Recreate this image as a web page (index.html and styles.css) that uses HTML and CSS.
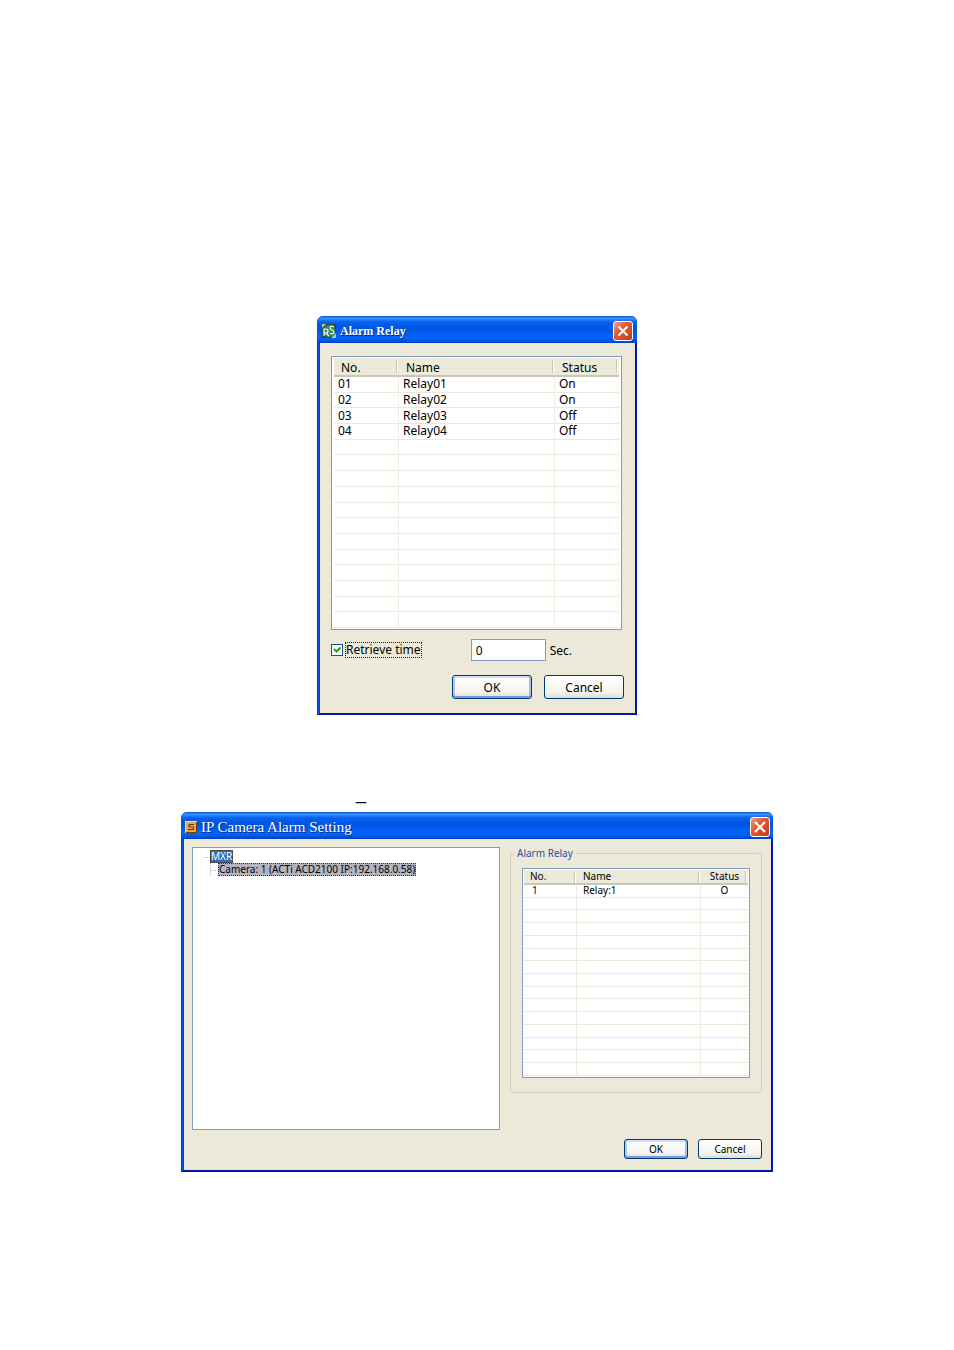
FILE: index.html
```
<!DOCTYPE html>
<html lang="en">
<head>
    <meta charset="utf-8">
    <title>Alarm Relay</title>
    <link rel="stylesheet" href="styles.css">
</head>
<body>
    <main class="page">
        <!-- Alarm relay dialog -->
        <section class="dialog relay-dialog">
            <header class="titlebar">
                <svg class="app-icon" viewBox="0 0 14 14">
                    <rect width="14" height="14" fill="#1d5540"/>
                    <circle cx="7" cy="7" r="6" fill="#348b60"/>
                    <path d="M0 0h4L0 4zM14 14h-5l5-5z" fill="#a9c9b5"/>
                    <path d="M2 12V5h2q2 0 2 2T4 9H2M4 9l3 3M12 3q-4-2-4 1 0 1 2 2 2 1 2 2 0 3-4 1" fill="none" stroke="#fff" stroke-width="1.200"/>
                </svg>
                <h2 class="title">Alarm Relay</h2>
                <button type="button" class="close" aria-label="Close">
                    <svg viewBox="0 0 18 18"><path d="M4.500 4.500l9 9M13.500 4.500l-9 9" stroke="#fff" stroke-width="2.200"/></svg>
                </button>
            </header>
            <form class="content">
                <div class="list">
                    <table>
                        <colgroup><col class="col-no"><col><col class="col-status"></colgroup>
                        <thead>
                            <tr><th>No.</th><th>Name</th><th>Status</th></tr>
                        </thead>
                        <tbody>
                            <tr><td>01</td><td>Relay01</td><td>On</td></tr>
                            <tr><td>02</td><td>Relay02</td><td>On</td></tr>
                            <tr><td>03</td><td>Relay03</td><td>Off</td></tr>
                            <tr><td>04</td><td>Relay04</td><td>Off</td></tr>
                            <tr><td></td><td></td><td></td></tr>
                            <tr><td></td><td></td><td></td></tr>
                            <tr><td></td><td></td><td></td></tr>
                            <tr><td></td><td></td><td></td></tr>
                            <tr><td></td><td></td><td></td></tr>
                            <tr><td></td><td></td><td></td></tr>
                            <tr><td></td><td></td><td></td></tr>
                            <tr><td></td><td></td><td></td></tr>
                            <tr><td></td><td></td><td></td></tr>
                            <tr><td></td><td></td><td></td></tr>
                            <tr><td></td><td></td><td></td></tr>
                            <tr><td></td><td></td><td></td></tr>
                        </tbody>
                    </table>
                </div>
                <div class="retrieve">
                    <input type="checkbox" id="retrieve" class="check" checked>
                    <label for="retrieve" class="focused">Retrieve time</label>
                    <div class="seconds">
                        <input type="text" id="seconds" class="text-box" value="0">
                        <label for="seconds">Sec.</label>
                    </div>
                </div>
                <div class="buttons">
                    <button type="button" class="btn btn-default">OK</button>
                    <button type="button" class="btn">Cancel</button>
                </div>
            </form>
        </section>

        <p class="mark">_</p>

        <!-- IP camera alarm dialog -->
        <section class="dialog camera-dialog">
            <header class="titlebar">
                <svg class="app-icon" viewBox="0 0 12 12">
                    <rect width="12" height="12" fill="#fbe0a8"/>
                    <rect x="1" y="1" width="10" height="10" fill="#eda845"/>
                    <path d="M1 11.500h10.500V1" fill="none" stroke="#6d3c10"/>
                    <path d="M9 3.500H4v2.500h4.500v2.500H3" fill="none" stroke="#5a3512"/>
                </svg>
                <h2 class="title">IP Camera Alarm Setting</h2>
                <button type="button" class="close" aria-label="Close">
                    <svg viewBox="0 0 18 18"><path d="M4 4l10 10M14 4L4 14" stroke="#fff" stroke-width="2.200"/></svg>
                </button>
            </header>
            <form class="content">
                <div class="panels">
                    <ul class="tree">
                        <li><span class="node node-root">MXR</span>
                            <ul>
                                <li><span class="node node-camera">Camera: 1 (ACTi ACD2100 IP:192.168.0.58)</span></li>
                            </ul>
                        </li>
                    </ul>
                    <fieldset class="group">
                        <legend>Alarm Relay</legend>
                        <div class="list">
                            <table>
                                <colgroup><col class="col-no"><col><col class="col-status"></colgroup>
                                <thead>
                                    <tr><th>No.</th><th>Name</th><th>Status</th></tr>
                                </thead>
                                <tbody>
                                    <tr><td>1</td><td>Relay:1</td><td>O</td></tr>
                                    <tr><td></td><td></td><td></td></tr>
                                    <tr><td></td><td></td><td></td></tr>
                                    <tr><td></td><td></td><td></td></tr>
                                    <tr><td></td><td></td><td></td></tr>
                                    <tr><td></td><td></td><td></td></tr>
                                    <tr><td></td><td></td><td></td></tr>
                                    <tr><td></td><td></td><td></td></tr>
                                    <tr><td></td><td></td><td></td></tr>
                                    <tr><td></td><td></td><td></td></tr>
                                    <tr><td></td><td></td><td></td></tr>
                                    <tr><td></td><td></td><td></td></tr>
                                    <tr><td></td><td></td><td></td></tr>
                                    <tr><td></td><td></td><td></td></tr>
                                    <tr><td></td><td></td><td></td></tr>
                                </tbody>
                            </table>
                        </div>
                    </fieldset>
                </div>
                <div class="buttons">
                    <button type="button" class="btn btn-default">OK</button>
                    <button type="button" class="btn">Cancel</button>
                </div>
            </form>
        </section>
    </main>
</body>
</html>
```
FILE: styles.css
```
* {
    box-sizing: border-box;
}
body {
    margin: 0;
    background: #fff;
    color: #000;
    font-family: "Noto Sans", sans-serif;
    font-size: 12px;
}
.page {
    display: flex;
    flex-direction: column;
    align-items: center;
    padding: 316px 16px 64px;
}

/* Dialog window */
.dialog {
    width: 100%;
    border: solid;
    border-color: #0046e0 #0019a8 #0019a8 #0046e0;
    border-width: 0 2px 2px 3px;
    border-radius: 6px 6px 0 0;
    background: #ece9d8;
}
.relay-dialog {
    max-width: 320px;
}
.camera-dialog {
    max-width: 592px;
    font-size: 10px;
}
.titlebar {
    display: flex;
    align-items: center;
    gap: 4px;
    height: 27px;
    margin: 0 -2px 0 -3px;
    padding: 2px 4px 0 5px;
    border-radius: 6px 6px 0 0;
    background: linear-gradient(#0a4fd0, #3a93ff 8%, #0560ee 22%, #0054e3 45%, #0264fb 82%, #0253e0 92%, #003dc4);
}
.app-icon {
    width: 14px;
    height: 14px;
}
.title {
    flex: 1;
    margin: 0;
    color: #fff;
    font-family: "Liberation Serif", serif;
    font-size: 12px;
    line-height: 16px;
    text-shadow: 1px 1px 0 #0a2d80;
}
.camera-dialog .title {
    font-size: 15px;
    font-weight: normal;
}
.camera-dialog .app-icon {
    width: 12px;
    height: 12px;
}
.camera-dialog .titlebar {
    padding-left: 4px;
    padding-right: 3px;
}
.close {
    width: 20px;
    height: 20px;
    padding: 0;
    border: 1px solid #fff;
    border-radius: 3px;
    background: linear-gradient(135deg, #f0a088, #e25a35 40%, #c63a12);
}
.close svg {
    display: block;
}

/* List view */
.list {
    padding: 1px 2px;
    border: 1px solid #7f9db9;
    background: #fff;
}
.list table {
    width: 100%;
    height: 270px;
    border-collapse: separate;
    border-spacing: 0;
    table-layout: fixed;
}
.col-no {
    width: 65px;
}
.col-status {
    width: 64px;
}
th {
    height: 19px;
    padding: 2px 7px 0;
    border-bottom: 2px solid #cbc7b8;
    background: linear-gradient(90deg, #fff, #fff) right 1px center / 1px 12px no-repeat,
                linear-gradient(90deg, #c7c5b2, #c7c5b2) right 2px center / 1px 12px no-repeat #ebeadb;
    font-weight: normal;
    line-height: 15px;
    text-align: left;
}
td {
    height: 15px;
    padding: 0 4px;
    border-right: 1px solid #f0eee1;
    border-bottom: 1px solid #ece9d8;
    line-height: 14px;
}
td:last-child {
    border-right: 0;
}

/* Relay dialog */
.relay-dialog .content {
    padding: 13px 13px 14px 11px;
}
.retrieve {
    display: flex;
    align-items: center;
    margin-top: 9px;
}
.check {
    appearance: none;
    width: 12px;
    height: 12px;
    margin: 0 2px 0 0;
    border: 1px solid #1c5180;
    background: #fff;
}
.check:checked {
    background: #fff url("data:image/svg+xml,%3Csvg xmlns='http://www.w3.org/2000/svg' viewBox='0 0 10 10'%3E%3Cpath d='M2 4l2.500 2.500L8.500 2.500' fill='none' stroke='%2321a121' stroke-width='2'/%3E%3C/svg%3E");
}
.focused {
    outline: 1px dotted #222;
    outline-offset: -1px;
    padding: 0 1px;
    line-height: 16px;
}
.seconds {
    display: flex;
    align-items: center;
    gap: 4px;
    margin-left: auto;
    margin-right: 50px;
}
.text-box {
    width: 75px;
    height: 22px;
    padding: 0 4px;
    border: 1px solid #7f9db9;
    background: #fff;
    font: inherit;
}
.buttons {
    display: flex;
    justify-content: flex-end;
    gap: 12px;
    margin-top: 14px;
}
.relay-dialog .buttons {
    margin-right: -2px;
}
.btn {
    width: 80px;
    height: 24px;
    padding: 0;
    border: 1px solid #003c74;
    border-radius: 3px;
    background: linear-gradient(#fff, #f4f3ee 75%, #dedacb);
    color: #000;
    font: inherit;
}
.btn-default {
    box-shadow: inset 0 -2px #7b98e0, inset 2px 0 #b0c8f2, inset -2px 0 #a5bdec, inset 0 2px #cee0fb;
}

.mark {
    margin: 68px 232px 8px 0;
    font-family: "Liberation Sans", sans-serif;
    font-size: 18px;
    line-height: 21px;
}

/* Camera dialog */
.camera-dialog .content {
    padding: 8px 9px 11px 8px;
}
.panels {
    display: flex;
    align-items: flex-start;
    gap: 10px;
}
.tree {
    flex: 1 1 308px;
    height: 283px;
    margin: 0;
    padding: 2px 10px;
    border: 1px solid #7f9db9;
    background: #fff;
    list-style: none;
    line-height: 12px;
}
.tree ul {
    margin: 0;
    padding-left: 7px;
    list-style: none;
}
.tree li li {
    border-left: 1px dotted #bbb;
}
.tree li::before {
    content: "";
    display: inline-block;
    width: 7px;
    border-top: 1px dotted #bbb;
    vertical-align: middle;
}
.node {
    display: inline-block;
    outline: 1px dotted #333;
    outline-offset: -1px;
    padding: 0 1px;
    line-height: 13px;
}
.node-root {
    background: #316ac5;
    color: #fff;
}
.node-camera {
    background: #b5b4bf;
}
.group {
    flex: 1 1 252px;
    min-width: 0;
    margin: 0;
    padding: 8px 11px 14px;
    border: 1px solid #d0d0bf;
    border-radius: 4px;
}
.group legend {
    margin-left: -8px;
    padding: 0 3px;
    color: #2452a8;
    line-height: 13px;
}
.camera-dialog .list {
    padding: 1px 1px;
}
.camera-dialog .list table {
    height: 206px;
}
.camera-dialog .col-no {
    width: 53px;
}
.camera-dialog .col-status {
    width: 47px;
}
.camera-dialog th {
    height: 15px;
    padding: 0 6px;
    line-height: 13px;
}
.camera-dialog td {
    height: 12px;
    padding: 0 6px;
    line-height: 11px;
}
.camera-dialog th:last-child,
.camera-dialog td:last-child {
    text-align: center;
}
.camera-dialog td:first-child {
    padding-left: 8px;
}
.camera-dialog .buttons {
    gap: 10px;
    margin-top: 9px;
}
.camera-dialog .btn {
    width: 64px;
    height: 20px;
}
```
